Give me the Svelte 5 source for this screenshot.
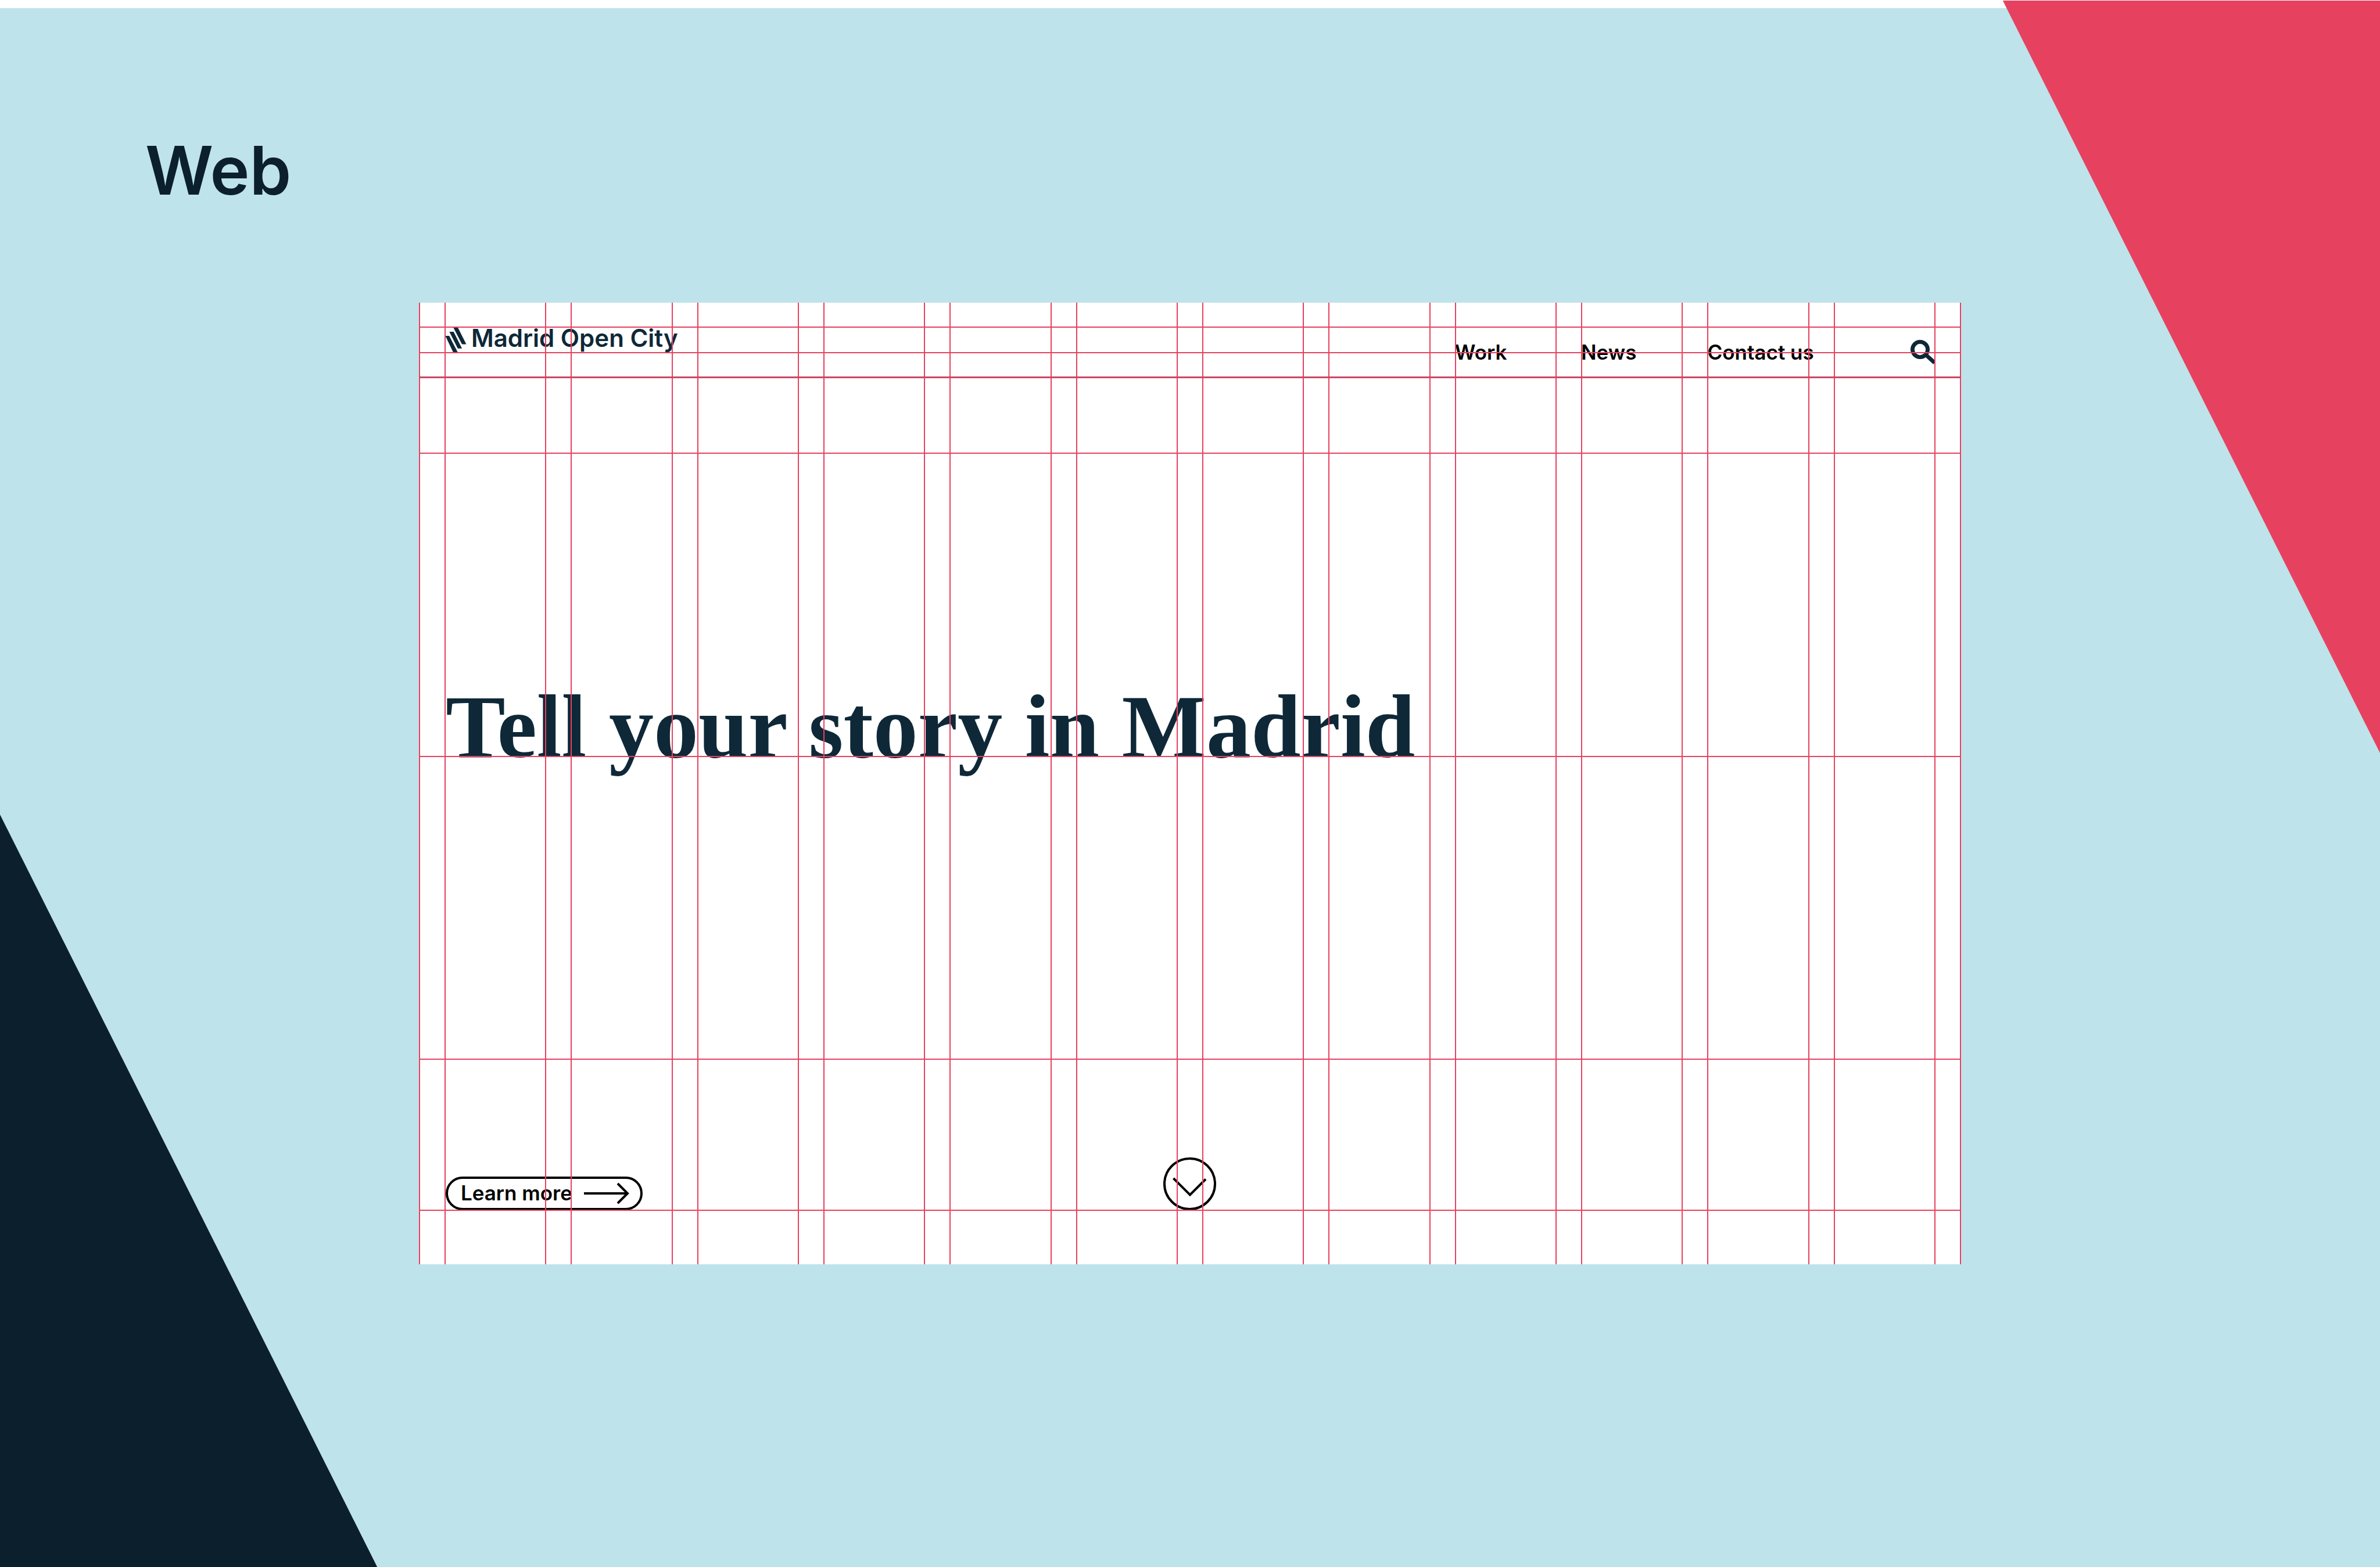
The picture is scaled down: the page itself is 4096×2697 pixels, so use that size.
<script>
  const columns = Array.from({ length: 12 }, (_, i) => i);
  const rows = Array.from({ length: 7 }, (_, i) => i);
  const links = ['Work', 'News', 'Contact us'];
</script>

<main class="page">
  <div class="corner corner-pink"></div>
  <div class="corner corner-navy"></div>

  <h1 class="title">Web</h1>

  <section class="card">
    <a class="brand" href="#home">
      <svg class="mark" viewBox="0 0 36 42" aria-hidden="true">
        <path d="M13.4 0H21.1L35.5 28.5H28.1ZM6.4 7H13.7L28.1 35.8H20.8ZM-0.6 14H6.1L20.6 42H12.8Z" />
      </svg>
      <span>Madrid Open City</span>
    </a>

    <nav class="nav">
      {#each links as link}
        <a href="#{link}">{link}</a>
      {/each}
      <button class="search" aria-label="Search">
        <svg viewBox="0 0 44 42" aria-hidden="true">
          <circle cx="17.5" cy="16.5" r="13.1" />
          <path d="M26 24.5L42.6 39.4" />
        </svg>
      </button>
    </nav>

    <h2 class="headline">Tell your story in Madrid</h2>

    <button class="more">
      <span>Learn more</span>
      <svg viewBox="0 0 78 38" aria-hidden="true">
        <path d="M0 19H76M58 2L75 19L58 36" />
      </svg>
    </button>

    <button class="scroll" aria-label="Scroll down">
      <svg viewBox="0 0 91 91" aria-hidden="true">
        <circle cx="45.5" cy="45.5" r="43.5" />
        <path d="M17.5 36L46 64.5L73 37.5" />
      </svg>
    </button>

    <div class="guides guide-columns" aria-hidden="true">
      {#each columns as c (c)}
        <i></i>
      {/each}
    </div>
    <div class="guides guide-rows" aria-hidden="true">
      {#each rows as r (r)}
        <i></i>
      {/each}
    </div>
  </section>
</main>

<style>
  :global(body) {
    margin: 0;
  }

  .page {
    --pink: #e64260;
    --navy: #0c1f2d;
    --ink: #0e2838;
    --rows: 43px 44px 43px 130px 522px 521px 260px 92px;
    --edge: 44px;
    position: relative;
    box-sizing: border-box;
    min-height: 100vh;
    padding-top: 220px;
    border-top: 14px solid #fff;
    background: #bee3eb;
    font-family: Inter, 'Liberation Sans', sans-serif;
  }

  .corner {
    position: absolute;
    width: 15.85%;
    height: 1295px;
  }

  .corner-pink {
    top: -13px;
    right: 0;
    background: var(--pink);
    clip-path: polygon(0 0, 100% 0, 100% 100%);
  }

  .corner-navy {
    bottom: 0;
    left: 0;
    background: var(--navy);
    clip-path: polygon(0 0, 100% 100%, 0 100%);
  }

  .title {
    position: relative;
    margin: 0 0 167px;
    padding-left: 250px;
    color: var(--navy);
    font-size: 115px;
    font-weight: 600;
    line-height: 120px;
  }

  .card {
    position: relative;
    display: grid;
    grid-template-columns: repeat(12, minmax(0, 1fr));
    grid-template-rows: var(--rows);
    column-gap: 42px;
    box-sizing: border-box;
    width: 64.8%;
    margin: 0 auto;
    padding: 0 var(--edge);
    background: #fff;
  }

  a {
    color: #000;
    text-decoration: none;
  }

  button {
    padding: 0;
    border: 0;
    background: none;
    color: #000;
    font: inherit;
    cursor: pointer;
  }

  svg {
    display: block;
    fill: none;
    stroke: currentColor;
    stroke-width: 4;
  }

  .brand {
    grid-area: 2 / 1 / 3 / 6;
    justify-self: start;
    display: flex;
    gap: 8px;
    padding-left: 2px;
    color: var(--ink);
    font-size: 42px;
    font-weight: 600;
    line-height: 36px;
    white-space: nowrap;
  }

  .mark {
    width: 36px;
    height: 42px;
    fill: currentColor;
    stroke: none;
  }

  .nav {
    grid-area: 2 / 9 / 4 / 13;
    display: grid;
    grid-template-columns: repeat(4, minmax(0, 1fr));
    column-gap: 42px;
    align-items: center;
    box-sizing: border-box;
    padding-bottom: 4px;
    font-size: 35px;
    font-weight: 600;
    line-height: 44px;
    white-space: nowrap;
  }

  .search {
    justify-self: end;
    color: var(--ink);
  }

  .search svg {
    width: 44px;
    height: 42px;
    stroke-width: 6.8;
  }

  .headline {
    grid-area: 5 / 1 / 6 / 13;
    align-self: end;
    margin: 0 0 -24px;
    padding-left: 2px;
    color: var(--ink);
    font-family: 'Liberation Serif', serif;
    font-size: 154px;
    font-weight: 700;
    line-height: 152px;
    white-space: nowrap;
  }

  .more {
    grid-area: 7 / 1 / 8 / 4;
    align-self: end;
    justify-self: start;
    display: flex;
    align-items: center;
    gap: 20px;
    box-sizing: border-box;
    height: 58px;
    margin: 0 0 1px 2px;
    padding: 0 19px 0 22px;
    border: 4px solid #000;
    border-radius: 29px;
    font-size: 35px;
    font-weight: 600;
    line-height: 44px;
    white-space: nowrap;
  }

  .more span {
    padding-bottom: 2px;
  }

  .more svg {
    width: 78px;
    height: 38px;
  }

  .scroll {
    grid-area: 7 / 1 / 8 / 13;
    align-self: end;
    justify-self: center;
    margin-bottom: 1px;
  }

  .scroll svg {
    width: 91px;
    height: 91px;
  }

  .guides {
    position: absolute;
    inset: 0;
    display: grid;
    pointer-events: none;
  }

  .guide-columns {
    grid-template-columns: repeat(12, minmax(0, 1fr));
    column-gap: 42px;
    padding: 0 42px;
    border: solid var(--pink);
    border-width: 0 2px;
  }

  .guide-columns i {
    border: solid var(--pink);
    border-width: 0 2px;
  }

  .guide-rows {
    grid-template-rows: var(--rows);
  }

  .guide-rows i {
    border-bottom: 2px solid var(--pink);
  }

  .guide-rows i:nth-child(3) {
    box-shadow: inset 0 -1px #964b62;
  }
</style>
